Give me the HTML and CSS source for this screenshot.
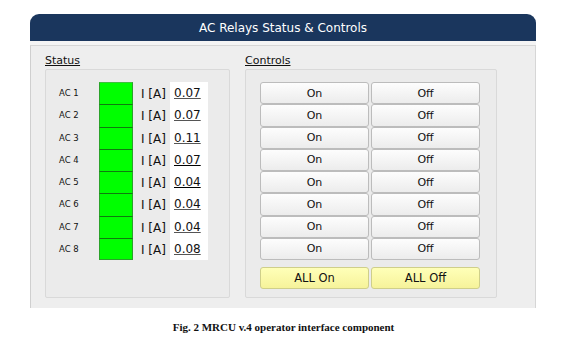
FILE: index.html
```html
<!DOCTYPE html>
<html lang="en">
<head>
    <meta charset="UTF-8">
    <meta name="viewport" content="width=device-width, initial-scale=1.0">
    <title>AC Relays Status &amp; Controls</title>
    <link rel="stylesheet" href="styles.css">
</head>
<body>
    <div class="figure">
        <div class="panel">
            <div class="panel-head">AC Relays Status &amp; Controls</div>
            <div class="panel-body">
                <div class="panel-inner">
                    <div class="section status-section">
                        <div class="section-title">Status</div>
                        <div class="section-box status-box">
                            <div class="status-labels">
                                <div class="ac-label">AC 1</div>
                                <div class="ac-label">AC 2</div>
                                <div class="ac-label">AC 3</div>
                                <div class="ac-label">AC 4</div>
                                <div class="ac-label">AC 5</div>
                                <div class="ac-label">AC 6</div>
                                <div class="ac-label">AC 7</div>
                                <div class="ac-label">AC 8</div>
                            </div>
                            <div class="status-leds">
                                <div class="led"></div>
                                <div class="led"></div>
                                <div class="led"></div>
                                <div class="led"></div>
                                <div class="led"></div>
                                <div class="led"></div>
                                <div class="led"></div>
                                <div class="led"></div>
                            </div>
                            <div class="status-units">
                                <div class="unit">I [A]</div>
                                <div class="unit">I [A]</div>
                                <div class="unit">I [A]</div>
                                <div class="unit">I [A]</div>
                                <div class="unit">I [A]</div>
                                <div class="unit">I [A]</div>
                                <div class="unit">I [A]</div>
                                <div class="unit">I [A]</div>
                            </div>
                            <div class="status-values">
                                <div class="value">0.07</div>
                                <div class="value">0.07</div>
                                <div class="value">0.11</div>
                                <div class="value dark">0.07</div>
                                <div class="value dark">0.04</div>
                                <div class="value">0.04</div>
                                <div class="value">0.04</div>
                                <div class="value">0.08</div>
                            </div>
                        </div>
                    </div>

                    <div class="section controls-section">
                        <div class="section-title">Controls</div>
                        <div class="section-box controls-box">
                            <div class="control-grid">
                                <button class="ctl-button">On</button>
                                <button class="ctl-button">Off</button>
                                <button class="ctl-button">On</button>
                                <button class="ctl-button">Off</button>
                                <button class="ctl-button">On</button>
                                <button class="ctl-button">Off</button>
                                <button class="ctl-button">On</button>
                                <button class="ctl-button">Off</button>
                                <button class="ctl-button">On</button>
                                <button class="ctl-button">Off</button>
                                <button class="ctl-button">On</button>
                                <button class="ctl-button">Off</button>
                                <button class="ctl-button">On</button>
                                <button class="ctl-button">Off</button>
                                <button class="ctl-button">On</button>
                                <button class="ctl-button">Off</button>
                            </div>
                            <div class="all-grid">
                                <button class="ctl-button all-button">ALL On</button>
                                <button class="ctl-button all-button">ALL Off</button>
                            </div>
                        </div>
                    </div>
                </div>
            </div>
        </div>
        <div class="caption">Fig. 2 MRCU v.4 operator interface component</div>
    </div>
</body>
</html>
```

FILE: styles.css
```css
body {
    margin: 0;
    background-color: #ffffff;
    font-family: "DejaVu Sans", Verdana, sans-serif;
    color: #111;
}
.figure {
    width: 563px;
    padding-top: 14px;
}
.panel {
    margin-left: 30px;
    width: 506px;
}
.panel-head {
    height: 27px;
    line-height: 28px;
    background-color: #1a365d;
    color: #ffffff;
    border-radius: 9px 9px 0 0;
    text-align: center;
    font-size: 12px;
}
.panel-body {
    background-color: #f4f4f4;
    padding-top: 4px;
}
.panel-inner {
    display: flex;
    height: 262px;
    background-color: #eeeeee;
    border-top: 1px solid #d6d6d6;
    border-left: 1px solid #cfcfcf;
    border-right: 1px solid #d6d6d6;
    padding-left: 14px;
}
.section-title {
    font-size: 11px;
    text-decoration: underline;
    height: 23px;
    line-height: 29px;
}
.section-box {
    background-color: #ebebeb;
    border: 1px solid #d9d9d9;
    border-radius: 2px;
    height: 229px;
    box-sizing: border-box;
    padding-top: 12px;
}
.status-section {
    width: 185px;
    margin-right: 15px;
}
.status-box {
    display: flex;
    padding-left: 13px;
}
.status-labels {
    width: 40px;
}
.ac-label {
    height: 22.25px;
    line-height: 22px;
    font-size: 8.5px;
}
.led {
    width: 34px;
    height: 22.25px;
    box-sizing: border-box;
    background-color: #00ff00;
    border-top: 1px solid #107a10;
    border-left: 1px solid #2aa22a;
    border-right: 1px solid #2aa22a;
}
.led:first-child {
    border-top-color: #3fbf3f;
}
.led:last-child {
    border-bottom: 1px solid #2aa22a;
}
.status-units {
    width: 29px;
    padding-left: 8px;
}
.unit {
    height: 22.25px;
    line-height: 24px;
    font-size: 12px;
}
.status-values {
    width: 38px;
    background-color: #ffffff;
    padding-left: 4px;
    box-sizing: border-box;
    height: 178px;
}
.value {
    height: 22.25px;
    line-height: 22px;
    font-size: 12px;
    text-decoration: underline;
    text-decoration-color: #555;
}
.value.dark {
    text-decoration-color: #000;
}
.controls-section {
    width: 252px;
}
.controls-box {
    padding-left: 14px;
}
.control-grid,
.all-grid {
    display: grid;
    grid-template-columns: 109px 109px;
    column-gap: 2px;
    grid-auto-rows: 22.25px;
}
.all-grid {
    margin-top: 7px;
    grid-auto-rows: 22px;
}
.ctl-button {
    margin: 0;
    padding: 0;
    font-family: "DejaVu Sans", Verdana, sans-serif;
    font-size: 11px;
    color: #111;
    background: linear-gradient(#fdfdfd, #ececec);
    border: 1px solid #bcbcbc;
    border-radius: 3px;
}
.all-button {
    background: linear-gradient(#ffffb8, #f6f39a);
    border-color: #cfcf8a;
    font-size: 11.5px;
}
.caption {
    margin-top: 13px;
    text-align: center;
    font-family: "Liberation Serif", "Times New Roman", serif;
    font-weight: bold;
    font-size: 11px;
    padding-left: 4px;
}
```
